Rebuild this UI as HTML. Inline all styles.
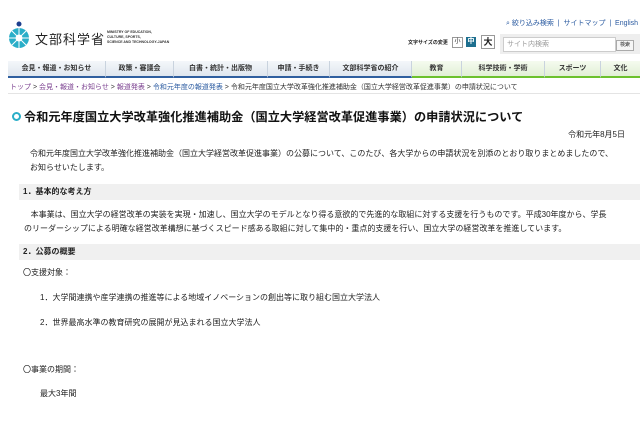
<!DOCTYPE html><html><head><meta charset="utf-8"><style>
body{margin:0;width:640px;height:426px;overflow:hidden;background:#fff;font-family:"Liberation Sans","Noto Sans CJK JP",sans-serif;color:#222;position:relative}
.a{position:absolute;white-space:nowrap}
.nav{position:absolute;top:61px;left:8px;width:632px;height:17px;display:flex}
.nav div{height:15px;font-size:7px;font-weight:bold;line-height:15px;text-align:center;border-right:1px solid #c9d3de;color:#333}
.b{background:linear-gradient(#f4f7fa,#dfe6ee);border-bottom:2px solid #2f5f9f}
.g{background:linear-gradient(#f5fbef,#e1efd6);border-bottom:2px solid #6cc12e}
.sec{position:absolute;left:19px;width:621px;height:16px;background:#f0f0f0;font-size:8px;font-weight:bold;line-height:16px;padding-left:4px}
.t{font-size:8px}
</style></head><body>
<svg class="a" style="left:8px;top:21px" width="24" height="28" viewBox="0 0 24 28"><circle cx="11" cy="3" r="2.5" fill="#1d3f8e"/><circle cx="11" cy="17" r="10" fill="#2aaec8"/><circle cx="11" cy="17" r="3.5" fill="#fff"/><g stroke="#fff" stroke-width="1"><line x1="11" y1="7" x2="11" y2="27"/><line x1="1" y1="17" x2="21" y2="17"/><line x1="4" y1="10" x2="18" y2="24"/><line x1="18" y1="10" x2="4" y2="24"/></g></svg>
<div class="a" style="left:35px;top:29px;font-size:13px;letter-spacing:1px;color:#222">文部科学省</div>
<div class="a" style="left:107px;top:30px;font-size:3.5px;line-height:5px;font-weight:bold;color:#333">MINISTRY OF EDUCATION,<br>CULTURE, SPORTS,<br>SCIENCE AND TECHNOLOGY-JAPAN</div>
<div class="a" style="left:506px;top:18px;font-size:7px;color:#2a5aa0">⌕ 絞り込み検索 &nbsp;|&nbsp; サイトマップ &nbsp;|&nbsp; English</div>
<div class="a" style="left:408px;top:39px;font-size:5px;font-weight:bold">文字サイズの変更</div>
<div class="a" style="left:452px;top:37px;width:9px;height:9px;border:1px solid #999;font-size:6px;text-align:center;line-height:9px">小</div>
<div class="a" style="left:466px;top:37px;width:10px;height:10px;background:#1d6f8f;color:#fff;font-size:7px;text-align:center;line-height:10px;font-weight:bold">中</div>
<div class="a" style="left:481px;top:35px;width:12px;height:12px;border:1px solid #999;font-size:9px;text-align:center;line-height:12px;font-weight:bold">大</div>
<div class="a" style="left:500px;top:34px;width:140px;height:20px;background:#eee"></div>
<div class="a" style="left:503px;top:37px;width:108px;height:13px;background:#fff;border:1px solid #ccc;font-size:7px;line-height:13px;color:#999;padding-left:3px">サイト内検索</div>
<div class="a" style="left:616px;top:40px;width:16px;height:9px;border:1px solid #aaa;background:#f6f6f6;font-size:5px;text-align:center;line-height:9px">検索</div>
<div class="nav">
<div class="b" style="width:97px">会見・報道・お知らせ</div>
<div class="b" style="width:67px">政策・審議会</div>
<div class="b" style="width:93px">白書・統計・出版物</div>
<div class="b" style="width:61px">申請・手続き</div>
<div class="b" style="width:81px">文部科学省の紹介</div>
<div class="g" style="width:49px">教育</div>
<div class="g" style="width:82px">科学技術・学術</div>
<div class="g" style="width:55px">スポーツ</div>
<div class="g" style="width:39px;border-right:0">文化</div>
</div>
<div class="a" style="left:10px;top:82px;font-size:7px;color:#7a3f8f">トップ <span style="color:#333">&gt;</span> 会見・報道・お知らせ <span style="color:#333">&gt;</span> 報道発表 <span style="color:#333">&gt;</span> <span style="color:#2a5aa0">令和元年度の報道発表</span> <span style="color:#333">&gt; 令和元年度国立大学改革強化推進補助金（国立大学経営改革促進事業）の申請状況について</span></div>
<div class="a" style="left:8px;top:93px;width:632px;border-top:1px solid #e4e4e4"></div>
<div class="a" style="left:12px;top:112px;width:5px;height:5px;border:2px solid #2aaec8;border-radius:50%"></div>
<div class="a" style="left:24px;top:107px;font-size:12.2px;font-weight:bold;color:#111">令和元年度国立大学改革強化推進補助金（国立大学経営改革促進事業）の申請状況について</div>
<div class="a t" style="right:15px;top:129px">令和元年8月5日</div>
<div class="a t" style="left:30px;top:147px;line-height:14px">令和元年度国立大学改革強化推進補助金（国立大学経営改革促進事業）の公募について、このたび、各大学からの申請状況を別添のとおり取りまとめましたので、<br>お知らせいたします。</div>
<div class="sec" style="top:184px">1．基本的な考え方</div>
<div class="a t" style="left:24px;top:208px;line-height:14px">&nbsp;&nbsp;&nbsp;本事業は、国立大学の経営改革の実装を実現・加速し、国立大学のモデルとなり得る意欲的で先進的な取組に対する支援を行うものです。平成30年度から、学長<br>のリーダーシップによる明確な経営改革構想に基づくスピード感ある取組に対して集中的・重点的支援を行い、国立大学の経営改革を推進しています。</div>
<div class="sec" style="top:244px">2．公募の概要</div>
<div class="a t" style="left:23px;top:267px">〇支援対象：</div>
<div class="a t" style="left:40px;top:292px">1．大学間連携や産学連携の推進等による地域イノベーションの創出等に取り組む国立大学法人</div>
<div class="a t" style="left:40px;top:317px">2．世界最高水準の教育研究の展開が見込まれる国立大学法人</div>
<div class="a t" style="left:23px;top:364px">〇事業の期間：</div>
<div class="a t" style="left:40px;top:388px">最大3年間</div>
</body></html>
